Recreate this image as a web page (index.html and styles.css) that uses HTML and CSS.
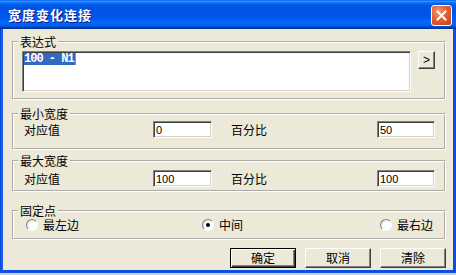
FILE: index.html
```html
<!DOCTYPE html>
<html lang="zh-CN">
<head>
    <meta charset="UTF-8">
    <title>宽度变化连接</title>
    <link rel="stylesheet" href="styles.css">
</head>
<body>
    <div class="window">
        <div class="titlebar">
            <span class="title">宽度变化连接</span>
            <button class="close" title="关闭">
                <svg width="11" height="11" viewBox="0 0 11 11">
                    <path d="M1.5 1.5 L9.5 9.5 M9.5 1.5 L1.5 9.5" stroke="#fff" stroke-width="2" stroke-linecap="square"/>
                </svg>
            </button>
        </div>

        <div class="client">
            <fieldset class="group group-expr">
                <legend>表达式</legend>
                <div class="expr-row">
                    <div class="expr-box"><span class="sel">100 - N1</span><span class="caret"></span></div>
                    <button class="btn btn-small">&gt;</button>
                </div>
            </fieldset>

            <fieldset class="group group-min">
                <legend>最小宽度</legend>
                <div class="field-row">
                    <span>对应值</span>
                    <input class="edit" type="text" value="0">
                    <span class="pct">百分比</span>
                    <input class="edit" type="text" value="50">
                </div>
            </fieldset>

            <fieldset class="group group-max">
                <legend>最大宽度</legend>
                <div class="field-row">
                    <span>对应值</span>
                    <input class="edit" type="text" value="100">
                    <span class="pct">百分比</span>
                    <input class="edit" type="text" value="100">
                </div>
            </fieldset>

            <fieldset class="group group-anchor">
                <legend>固定点</legend>
                <div class="radio-row">
                    <label class="radio"><span class="dot"></span>最左边</label>
                    <label class="radio"><span class="dot checked"></span>中间</label>
                    <label class="radio"><span class="dot"></span>最右边</label>
                </div>
            </fieldset>

            <div class="actions">
                <button class="btn btn-default">确定</button>
                <button class="btn">取消</button>
                <button class="btn">清除</button>
            </div>
        </div>
    </div>
</body>
</html>
```

FILE: styles.css
```css
* {
    box-sizing: border-box;
}

body {
    margin: 0;
    background: #d4d0c8;
    font-family: "Noto Sans CJK SC", sans-serif;
    font-size: 12px;
    color: #000;
}

.window {
    width: 456px;
    height: 273px;
    display: flex;
    flex-direction: column;
    background: linear-gradient(to right, #0a3fd0, #1768f0 2px, #0a4fe0 3px);
}

.titlebar {
    height: 29px;
    display: flex;
    justify-content: space-between;
    align-items: flex-start;
    padding: 0 4px 0 8px;
    background: linear-gradient(to bottom,
        #0058ee 0%, #3593ff 4%, #288eff 6%, #127dff 8%, #036ffc 10%,
        #0262ee 14%, #0057e5 20%, #0054e3 24%, #0055eb 56%, #005bf5 66%,
        #026afe 76%, #0062ef 86%, #0052d6 92%, #0040ab 94%, #003092 100%);
}

.title {
    margin-top: 6px;
    color: #fff;
    font-weight: bold;
    font-size: 13px;
    line-height: 17px;
    letter-spacing: 1px;
    text-shadow: 1px 1px #0a1883;
}

.close {
    width: 21px;
    height: 21px;
    margin-top: 5px;
    padding: 0;
    display: flex;
    align-items: center;
    justify-content: center;
    border: 1px solid #fff;
    border-radius: 3px;
    background: radial-gradient(circle at 35% 30%, #f09a78, #e06038 45%, #c2401a);
}

.client {
    flex: 1;
    margin: 0 3px 3px 3px;
    padding: 6px 7px 0 9px;
    background: #ece9d8;
    display: flex;
    flex-direction: column;
}

.group {
    margin: 0;
    min-width: 0;
    border: 2px groove #fff;
    padding: 0 9px 0 4px;
}

.group legend {
    padding: 0 2px;
    line-height: 14px;
}

.group-expr {
    padding-top: 2px;
    padding-bottom: 6px;
}

.group-min {
    margin-top: 7px;
    padding-bottom: 10px;
}

.group-max {
    margin-top: 4px;
    padding-top: 2px;
    padding-bottom: 3px;
}

.group-anchor {
    margin-top: 12px;
    padding-top: 1px;
    padding-bottom: 7px;
}

.expr-row {
    display: flex;
    gap: 7px;
    padding-left: 4px;
}

.expr-box {
    flex: 1;
    height: 41px;
    background: #fff;
    border: 1px solid;
    border-color: #808080 #fff #fff #808080;
    box-shadow: inset 1px 1px #404040, inset -1px -1px #d4d0c8;
    padding: 1px 0 0 1px;
    display: flex;
    align-items: flex-start;
}

.sel {
    background: #316ac5;
    color: #fff;
    font-family: "Liberation Mono", monospace;
    font-weight: bold;
    font-size: 12px;
    letter-spacing: -1px;
    line-height: 12px;
    padding-right: 1px;
    white-space: pre;
}

.caret {
    width: 1px;
    height: 12px;
    background: #c88a2a;
}

.btn {
    background: #ece9d8;
    border: 1px solid;
    border-color: #fff #404040 #404040 #fff;
    box-shadow: inset -1px -1px #808080;
    font-family: "Noto Sans CJK SC", sans-serif;
    font-size: 12px;
    color: #000;
    padding: 0;
    line-height: 16px;
}

.btn-small {
    width: 17px;
    height: 18px;
    font-family: "Liberation Sans", sans-serif;
    font-size: 12px;
}

.field-row {
    display: grid;
    grid-template-columns: 129px 59px 1fr 58px;
    align-items: center;
    padding-left: 6px;
}

.pct {
    padding-left: 19px;
}

.edit {
    width: 100%;
    height: 17px;
    margin: 0;
    padding: 0 0 0 2px;
    background: #fff;
    border: 1px solid;
    border-color: #808080 #fff #fff #808080;
    box-shadow: inset 1px 1px #404040, inset -1px -1px #d4d0c8;
    font-family: "Liberation Sans", sans-serif;
    font-size: 11px;
    color: #000;
    outline: none;
}

.radio-row {
    display: grid;
    grid-template-columns: 176px 178px 1fr;
    padding-left: 8px;
}

.radio {
    display: flex;
    align-items: center;
    gap: 5px;
    line-height: 12px;
}

.dot {
    width: 12px;
    height: 12px;
    border-radius: 50%;
    border: 1px solid;
    border-color: #808080 #fff #fff #808080;
    background: radial-gradient(circle at 65% 65%, #fff 40%, #d8d6cc);
    display: flex;
    align-items: center;
    justify-content: center;
}

.dot.checked::after {
    content: "";
    width: 4px;
    height: 4px;
    border-radius: 50%;
    background: #000;
}

.actions {
    display: flex;
    justify-content: flex-end;
    gap: 9px;
    margin-top: 8px;
}

.actions .btn {
    width: 66px;
    height: 20px;
}

.actions .btn-default {
    border: 1px solid #000;
    box-shadow: inset 1px 1px #fff, inset -1px -1px #404040, inset -2px -2px #808080;
}
```
